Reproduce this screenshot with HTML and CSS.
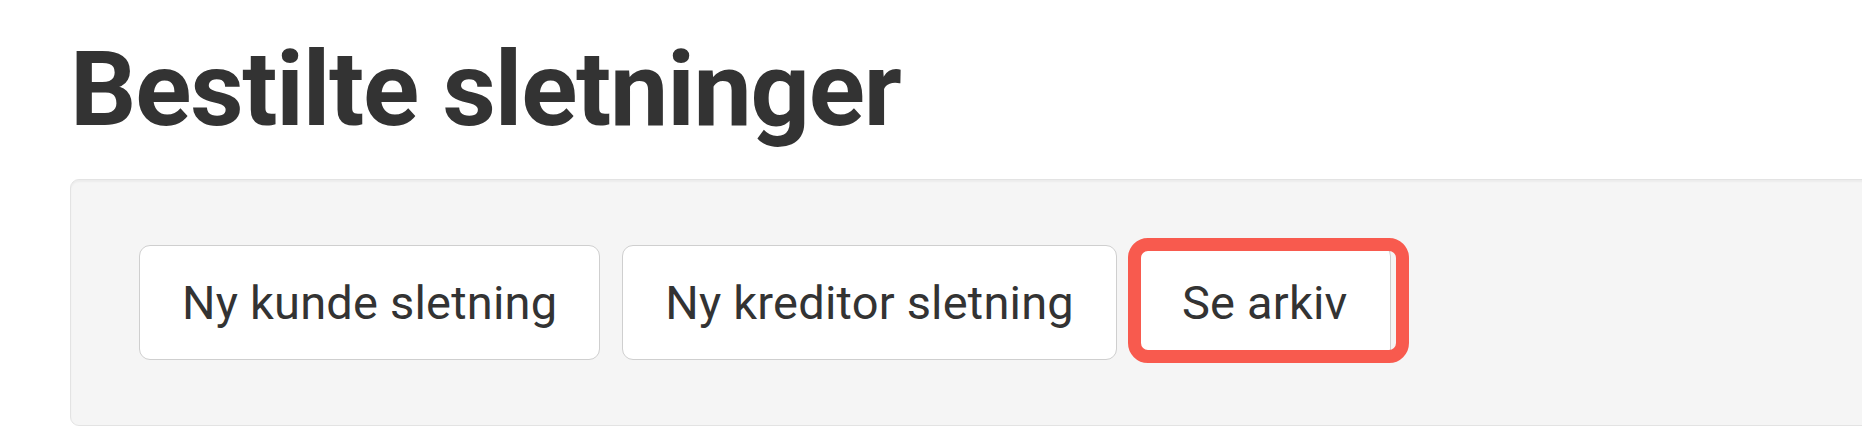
FILE: index.html
```html
<!DOCTYPE html>
<html lang="da">
<head>
    <meta charset="UTF-8">
    <meta name="viewport" content="width=device-width, initial-scale=1.0">
    <title>Bestilte sletninger</title>
    <link rel="stylesheet" href="styles.css">
</head>
<body>
    <div class="page">
        <h1>Bestilte sletninger</h1>
        <div class="well">
            <button type="button" class="btn">Ny kunde sletning</button>
            <button type="button" class="btn">Ny kreditor sletning</button>
            <button type="button" class="btn marked">Se arkiv</button>
        </div>
    </div>
</body>
</html>
```

FILE: styles.css
```css
body {
    font-family: Roboto, "Liberation Sans", Arial, sans-serif;
    background: #fff;
    color: #333;
    margin: 0;
    padding: 0;
    overflow: hidden;
}

.page {
    padding: 33px 0 0 70px;
}

h1 {
    font-size: 104px;
    font-weight: 700;
    line-height: 1.1;
    letter-spacing: -1.2px;
    margin: 0 0 32px;
}

.well {
    width: 1860px;
    height: 247px;
    box-sizing: border-box;
    background: #f5f5f5;
    border: 1px solid #e3e3e3;
    border-radius: 9px;
    box-shadow: inset 0 2px 2px rgba(0, 0, 0, 0.04);
    padding: 65px 0 0 68px;
    display: flex;
    align-items: flex-start;
    gap: 22px;
}

.btn {
    font-family: inherit;
    font-size: 47px;
    letter-spacing: 0.2px;
    line-height: 64px;
    color: #333;
    background: #fff;
    border: 1px solid #cfcfcf;
    border-radius: 11px;
    padding: 25px 42px 24px;
    cursor: pointer;
}

.marked {
    position: relative;
}

.marked::after {
    content: "";
    position: absolute;
    top: -8px;
    left: -12px;
    right: -19px;
    bottom: -4px;
    border: 13px solid #f85a4e;
    border-radius: 20px;
    pointer-events: none;
}
```
